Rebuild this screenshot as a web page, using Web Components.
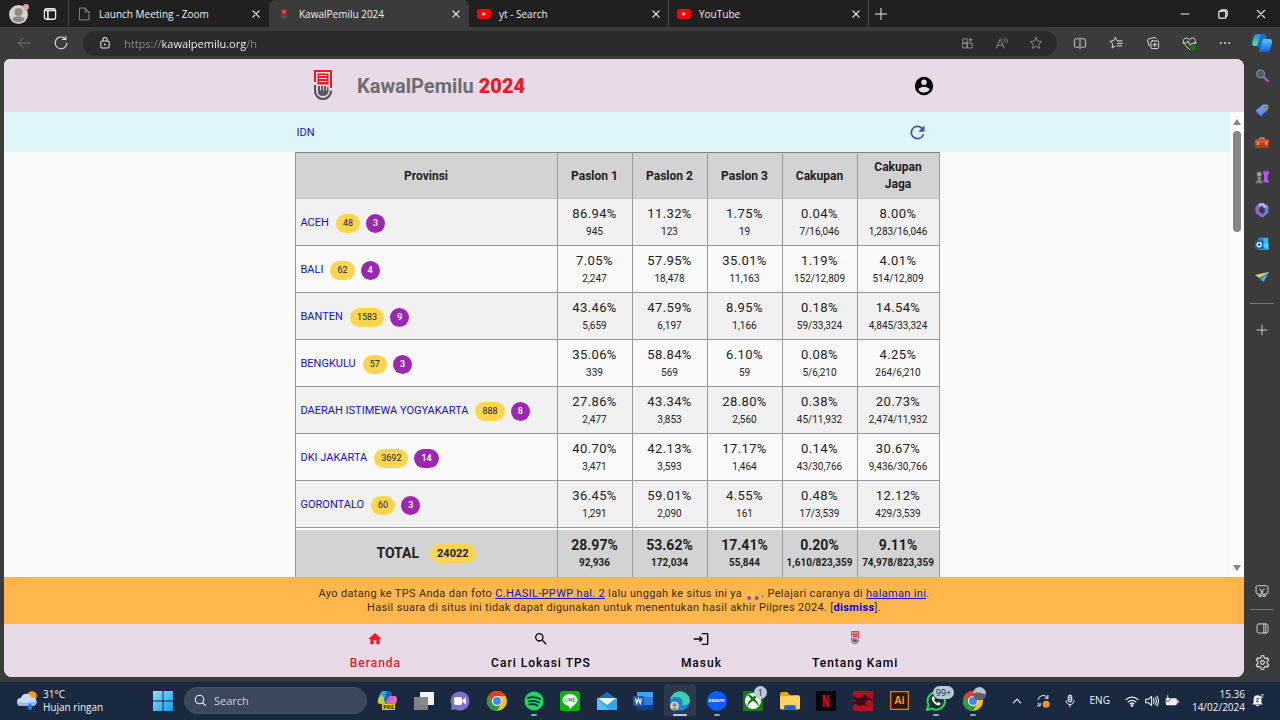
<!DOCTYPE html>
<html lang="id">
<head>
<meta charset="utf-8">
<title>KawalPemilu 2024</title>
<style>
  html, body { margin: 0; height: 100%; }
  body { font-family: Roboto, "Liberation Sans", sans-serif; }
</style>
</head>
<body>
<desktop-screen></desktop-screen>
<script>
const UI = '"Open Sans", "Noto Sans", sans-serif';

const line = (d, w = 1.2, box = 20) =>
  `<svg viewBox="0 0 ${box} ${box}" fill="none" stroke="currentColor" stroke-width="${w}" stroke-linecap="round" stroke-linejoin="round">${d}</svg>`;

const chrome = `<circle cx="10" cy="10" r="10" fill="#fbc116"/>
  <path d="M1.34 5A10 10 0 0 1 18.66 5H10a5 5 0 0 0-4.3 7.5z" fill="#e33b2e"/>
  <path d="M1.34 5A10 10 0 0 0 10 20l4.33-7.5A5 5 0 0 1 5.67 12.5z" fill="#269e48"/>
  <circle cx="10" cy="10" r="5" fill="#fff"/><circle cx="10" cy="10" r="4" fill="#4285f4"/>`;

const ICONS = {
  close: line('<path d="M5.500 5.500l9 9M14.500 5.500l-9 9"/>', 1.5),
  plus: line('<path d="M10 3v14M3 10h14"/>'),
  minus: line('<path d="M5 10h10"/>'),
  restore: line('<rect x="4" y="6" width="10" height="10" rx="1.5"/><path d="M6.500 6a2 2 0 0 1 2-2H14a2 2 0 0 1 2 2v5.500a2 2 0 0 1-2 2"/>', 1.7),
  avatar: `<svg viewBox="0 0 20 20"><circle cx="9.500" cy="10.500" r="9.500" fill="#d4d1cf"/><circle cx="9.500" cy="8" r="4" fill="#8d8a88"/><path d="M3.500 16c0-5 12-5 12 0a9 9 0 0 1-12 0z" fill="#8d8a88"/><circle cx="17" cy="3" r="3" fill="#f19a9a"/></svg>`,
  workspace: line('<rect x="2" y="2.500" width="16" height="15" rx="3"/><path d="M3 5h14M7 6v11" stroke-width="2.200"/>', 1.8),
  page: line('<path d="M4 1.500h7.500L17 7v11.500H4zM11.500 1.500V7H17"/>'),
  youtube: `<svg viewBox="0 0 20 20"><rect x="0" y="3" width="20" height="14" rx="3.500" fill="#f00"/><path d="M8 7l5 3-5 3z" fill="#fff"/></svg>`,
  logo: `<svg viewBox="0 0 36 60"><path d="M2 24V2h32v34" fill="none" stroke="#ec1c24" stroke-width="4"/><rect x="7" y="7" width="22" height="22" fill="#ec1c24"/><path d="M10 11h16M10 17h16M10 23h16" stroke="#f7e3ea" stroke-width="2"/><path d="M2 30v12a16 16 0 0 0 32 0v-1" fill="none" stroke="#58595b" stroke-width="4.500"/><path d="M8 32h4v9h2v-9h4v9h2v-9h4v9h2v-7h3v10q-2 8-11 8-10 0-10-8z" fill="#58595b"/></svg>`,
  back: line('<path d="M17 10H3M9 4l-6 6 6 6"/>'),
  reload: line('<path d="M15.500 5A7.300 7.300 0 1 0 17.300 10M16 1.500V5.500h-4"/>', 1.4),
  lock: line('<rect x="4" y="7" width="12" height="10" rx="2"/><path d="M7 7V5a3 3 0 0 1 6 0v2"/><circle cx="10" cy="12" r=".6"/>', 1.5),
  apps: line('<path d="M3 4h6v6H3zM3 10h6v7H3zM9 10h7v7H9zM13.500 3v5M11 5.500h5"/>'),
  readaloud: line('<path d="M2 17L7.500 4 13 17M4 13h7M12 4c1.500 1 2 3 1.500 5M15 2c2.500 2 3 5 2 8"/>'),
  star: line('<path d="M10 2l2.400 5.200 5.600.7-4.100 3.900 1.100 5.700-5-2.800-5 2.800 1.100-5.700L2 7.900l5.600-.7z"/>'),
  split: line('<path d="M8 4H3.500a1.500 1.500 0 0 0-1.500 1.500v9A1.500 1.500 0 0 0 3.500 16H8M12 4h4.500A1.500 1.500 0 0 1 18 5.500v9a1.500 1.500 0 0 1-1.500 1.500H12M10 2v16"/>'),
  favs: line('<path d="M13 7l-1.500-.2L9 2 6.500 6.800 1.500 7.500l3.700 3.800L4.500 17 9 14.500M13 7h6M12 10.500h7M12 14h6"/>', 1.4),
  collections: line('<rect x="7" y="7" width="11" height="11" rx="2"/><path d="M12.500 10v5M10 12.500h5M4.500 14L2 5.500 4 4l9-2 2 2"/>', 1.4),
  health: line('<path d="M3 10C-1 4 6 0 10 5c4-5 11-1 7 5M1 9.500h5l2-3 3 6 2-3h6M4 12l6 6"/><circle cx="15" cy="15" r="4" fill="#107c10" stroke="none"/>', 1.3),
  dots: `<svg viewBox="0 0 20 20" fill="currentColor"><circle cx="3" cy="10" r="1.600"/><circle cx="10" cy="10" r="1.600"/><circle cx="17" cy="10" r="1.600"/></svg>`,
  copilot: `<svg viewBox="0 0 20 20"><defs><linearGradient id="a" x2="0" y2="1"><stop stop-color="#1d8fe8"/><stop offset="1" stop-color="#5fdc9a"/></linearGradient><linearGradient id="b" x2="0" y2="1"><stop stop-color="#58c8f5"/><stop offset="1" stop-color="#1661e0"/></linearGradient></defs><path d="M5 1h8l-4 12H3Q0 13 0 10L2 3q1-2 3-2z" fill="url(#a)"/><path d="M11 6h6q4 0 3 4l-2 7q-1 2-3 2H7z" fill="url(#b)"/><path d="M9 1h3q2 0 3 5h-4L8 16l-3-3z" fill="#1570cf"/></svg>`,
  person: `<svg viewBox="0 0 24 24" fill="#000"><path d="M12 2a10 10 0 1 0 0 20 10 10 0 0 0 0-20zm0 3a3 3 0 1 1 0 6 3 3 0 0 1 0-6zm0 14.200c-2.500 0-4.710-1.280-6-3.220.03-1.990 4-3.080 6-3.080s5.970 1.090 6 3.080a7.200 7.200 0 0 1-6 3.220z"/></svg>`,
  refresh: `<svg viewBox="0 0 24 24" fill="#3f51b5"><path d="M17.650 6.350A8 8 0 1 0 19.730 14h-2.080A6 6 0 1 1 12 6c1.660 0 3.140.69 4.220 1.780L13 11h7V4z"/></svg>`,
  home: `<svg viewBox="0 0 24 24" fill="#ec1c24"><path d="M10 20v-6h4v6h5v-8h3L12 3 2 12h3v8z"/></svg>`,
  find: `<svg viewBox="0 0 24 24" fill="#000"><path d="M15.500 14h-.79l-.28-.27A6.500 6.500 0 1 0 13.730 14.430l.27.28v.79l5 4.990L20.490 19zm-6 0a4.500 4.500 0 1 1 0-9 4.500 4.500 0 0 1 0 9z"/></svg>`,
  login: `<svg viewBox="0 0 24 24" fill="#000"><path d="M10.500 7.500L9 9l2 2H1v2h10l-2 2 1.500 1.500L15 12zM21 19h-8v2h8a2 2 0 0 0 2-2V5a2 2 0 0 0-2-2h-8v2h8z"/></svg>`,
  hands: `<svg viewBox="0 0 16 16"><path d="M7 2l-3 8 4 2 4-2-3-8z" fill="#ffc93d"/><circle cx="3" cy="12" r="2.800" fill="#8e4fc0"/><circle cx="13" cy="12" r="2.800" fill="#8e4fc0"/></svg>`,
  sbsearch: `<svg viewBox="0 0 20 20"><path d="M13 12l5 5" stroke="#b04fe0" stroke-width="3.500" stroke-linecap="round"/><circle cx="8" cy="7" r="5.500" fill="#4c5f63" stroke="#8c989b" stroke-width="1.600"/></svg>`,
  tag: `<svg viewBox="0 0 20 20"><path d="M11 2h6q2 0 2 2v5l-9 9q-1.500 1.500-3 0L2 13q-1.500-1.500 0-3z" fill="#6c8ff5"/><path d="M2 11l6 6 10-8-8 9q-1.500 1.500-3 0L2 13z" fill="#4668dc"/><circle cx="15" cy="6" r="2.200" fill="#4a4a4a" stroke="#f4c04d" stroke-width="1.200"/></svg>`,
  toolbox: `<svg viewBox="0 0 20 20"><path d="M7 6V3h6v3" fill="none" stroke="#b0b0b0" stroke-width="1.500"/><rect y="5" width="20" height="12" rx="2" fill="#e0562b"/><path d="M0 10h20v5a2 2 0 0 1-2 2H2a2 2 0 0 1-2-2z" fill="#b53a17"/><path d="M4 9v4M16 9v4" stroke="#e8e0d8" stroke-width="2"/></svg>`,
  games: `<svg viewBox="0 0 20 20"><path d="M12 1h2v2h1V1h2v2h1V1h2v5l-2 1v6l2 3v2h-8V16l1-3V7l-1-1z" fill="#b455ea"/><circle cx="6" cy="6" r="3.500" fill="#9a9a9a"/><path d="M3 10h6l-1 2 1 3 2 3v1H1v-1l2-3 1-3z" fill="#818181"/></svg>`,
  m365: `<svg viewBox="0 0 20 20"><path d="M7 0h5l7 5v5l-5-2-5-4-3 3-1 7-4-3V5z" fill="#9db4f0"/><path d="M19 6v8l-7 6H9l-3-3 6-2 2-3V7l3-1z" fill="#5a84e6"/><path d="M1 5l5-3v10l5 4-2 4-8-5z" fill="#8f63d6"/></svg>`,
  outlook: `<svg viewBox="0 0 20 20"><rect x="5" y="1" width="14" height="17" rx="1" fill="#38b6f1"/><path d="M5 1h7v8H5z" fill="#1388d9"/><path d="M5 12l14-3v9H5z" fill="#50d9ff"/><path d="M5 10l14 8H5z" fill="#1490df"/><rect y="5" width="12" height="12" rx="1" fill="#0a64b4"/><circle cx="6" cy="11" r="3" fill="none" stroke="#fff" stroke-width="1.800"/></svg>`,
  plane: `<svg viewBox="0 0 20 20"><path d="M0 7l20-4-8 14-4-4z" fill="#4bb5e8"/><path d="M0 7l20-4L7 11z" fill="#f5cb4a"/><path d="M20 3L7 11v5l3-3z" fill="#2a86c5"/></svg>`,
  snip: line('<path d="M5 14H3a1.500 1.500 0 0 1-1.500-1.500V4A1.500 1.500 0 0 1 3 2.500h14A1.500 1.500 0 0 1 18.500 4v8.500A1.500 1.500 0 0 1 17 14h-2" stroke-dasharray="3 1.500"/><path d="M7 7l5 8M13 7l-5 8"/><circle cx="7" cy="16.500" r="1.700"/><circle cx="13" cy="16.500" r="1.700"/>', 1.4),
  panel: line('<rect x="1.500" y="3" width="17" height="14" rx="3"/><path d="M12 3v14M15 3v14"/>', 1.3),
  gear: line('<path d="M8.300 1h3.400l.5 2.800 1.700 1 2.700-1 1.700 3-2.200 1.800v2.800l2.200 1.800-1.700 3-2.700-1-1.700 1-.5 2.800H8.300l-.5-2.800-1.700-1-2.700 1-1.700-3 2.200-1.800V8.600L1.700 6.800l1.700-3 2.700 1 1.700-1z"/><circle cx="10" cy="10" r="2.500"/>', 1.5),
  weather: `<svg viewBox="0 0 20 20"><circle cx="15" cy="5" r="4.800" fill="#f69a1c"/><path d="M4 15a4 4 0 0 1 0-8 5.500 5.500 0 0 1 10.500-.5A4.300 4.300 0 0 1 16 15z" fill="#c9dcfa"/><path d="M4 15a4 4 0 0 1-3.800-5C4 13 12 12 19.500 10A4 4 0 0 1 16 15z" fill="#9ab6ef"/><path d="M13 12c3 3 3 7 0 7s-3-4 0-7z" fill="#2374e1"/></svg>`,
  windows: `<svg viewBox="0 0 20 20"><defs><linearGradient id="w" x2="1" y2="1"><stop stop-color="#8be0ff"/><stop offset="1" stop-color="#129bf0"/></linearGradient></defs><path d="M0 0h9.500v9.500H0zM10.500 0H20v9.500h-9.500zM0 10.500h9.500V20H0zM10.500 10.500H20V20h-9.500z" fill="url(#w)"/></svg>`,
  glass: line('<circle cx="8.500" cy="8.500" r="6.500"/><path d="M13.500 13.500L18 18"/>', 1.7),
  copilotpre: `<svg viewBox="0 0 20 20"><path d="M6 0h7l-4 12H3q-3 0-2-4L3 3q1-3 3-3z" fill="#2ca5e5"/><path d="M3 4l6 3-1 6H3q-3 0-2-4z" fill="#b9d33e"/><path d="M12 5h5q3 0 3 4l-2 5H8z" fill="#c966db"/><path d="M10 0h3q2 0 2 5h-4L8 12 7 8z" fill="#175fc5"/><path d="M17 5q3 0 3 4l-2 5h-4z" fill="#ee6f9c"/></svg>`,
  taskview: `<svg viewBox="0 0 20 20"><rect x="6" y="1" width="14" height="13" fill="#f2f2f2"/><rect y="6" width="14" height="13" fill="#858585" fill-opacity=".95"/></svg>`,
  chat: `<svg viewBox="0 0 20 20"><circle cx="10" cy="10" r="9.500" fill="#7b73cf"/><path d="M1 19l1-6 6 5z" fill="#7b73cf"/><rect x="4" y="6" width="8" height="8" rx="2" fill="#fff"/><path d="M12.500 9L16 6.500v7L12.500 11z" fill="#fff"/></svg>`,
  chrome: `<svg viewBox="0 0 20 20">${chrome}</svg>`,
  chromeuser: `<svg viewBox="0 0 20 20">${chrome}</svg>`,
  spotify: `<svg viewBox="0 0 20 20"><circle cx="10" cy="10" r="9.500" fill="#1ed760"/><path d="M4 7q6-2 12 1M5 10.500q5-1.500 10 1M5.500 13.500q4-1 8 1" stroke="#15233a" stroke-width="1.800" fill="none" stroke-linecap="round"/></svg>`,
  line: `<svg viewBox="0 0 20 20"><rect width="20" height="20" rx="3" fill="#06b806"/><ellipse cx="10" cy="9" rx="7.500" ry="6" fill="#fff"/><path d="M8 14l2 4 5-5z" fill="#fff"/><path d="M5 7v3.500h1.500M8 7v3.500M9.500 10.500V7l2 3.500V7M15 7h-1.800v3.500H15M13.200 8.800H15" stroke="#06b806" stroke-width=".8" fill="none"/></svg>`,
  mail: `<svg viewBox="0 0 20 20"><path d="M0 8l10-7 10 7z" fill="#1a6dbd"/><path d="M0 7h20v12H0z" fill="#2fa7e8"/><path d="M1 7h18l-9 7z" fill="#f1f6fa"/><path d="M0 7l12 12H0z" fill="#50c0f2"/></svg>`,
  word: `<svg viewBox="0 0 20 20"><rect x="4" y="1" width="16" height="18" rx="1" fill="#2b7cd3"/><path d="M4 1h16v5H4z" fill="#41a5ee"/><path d="M4 14h16v5H4z" fill="#103f91"/><rect y="5" width="11" height="10" rx="1" fill="#185abd"/><path d="M2.500 7.500l1.300 5 1.700-5 1.700 5 1.300-5" stroke="#fff" stroke-width="1.200" fill="none"/></svg>`,
  edge: `<svg viewBox="0 0 20 20"><circle cx="10" cy="10" r="9.800" fill="#1687ce"/><path d="M.3 9A9.800 9.800 0 0 1 19.800 9c.4 5-5 6-8 4.500 2-3 0-7-4-7C4 6.500 1 8 .3 9z" fill="#3fcfae"/><path d="M.3 9C3 5 11 5 12 10c-4-3-8 1-5 7-5 0-7-4-6.700-8z" fill="#1c7fce"/><circle cx="4.500" cy="15" r="4.500" fill="#d0cfcd"/><circle cx="4.500" cy="14" r="2" fill="#8a8886"/><path d="M2 18q2.500-3 5 0-2.500 2-5 0z" fill="#8a8886"/></svg>`,
  zoom: `<svg viewBox="0 0 20 20"><circle cx="10" cy="10" r="10" fill="#0b5cff"/></svg>`,
  xbox: `<svg viewBox="0 0 20 20"><rect width="20" height="20" rx="1" fill="#107c10"/><circle cx="10" cy="10" r="8" fill="#fff"/><path d="M4 4q3-1 6 2 3-3 6-2-2 1-4 4 4 4 4 8-3-5-6-6-3 1-6 6 0-4 4-8-2-3-4-4z" fill="#107c10"/></svg>`,
  folder: `<svg viewBox="0 0 20 20"><path d="M0 3q0-2 2-2h5l3 3h8q2 0 2 2v4H0z" fill="#e8a317"/><rect y="5" width="20" height="13.500" rx="1.500" fill="#ffd35c"/><path d="M4 19v-3q0-2 2-2h8q2 0 2 2v3z" fill="#1976d2"/><path d="M7 17h6" stroke="#0c4c8f"/></svg>`,
  netflix: `<svg viewBox="0 0 20 20"><rect width="20" height="20" fill="#050505"/><path d="M7.800 4v12M12.200 4v12" stroke="#b20710" stroke-width="2.200"/><path d="M6.700 4h2.200l4.400 12h-2.200z" fill="#e50914"/></svg>`,
  dragon: `<svg viewBox="0 0 20 20"><rect width="20" height="20" fill="#b0101f"/><path d="M0 5l5 2 4-1 3-3 2 3 5 2 1 2-4-1-3 1-1 3 4 2-6-1-4 1-3-2-3 1v-3l4-1-4-2z" fill="#3a0d18"/></svg>`,
  ai: `<svg viewBox="0 0 20 20"><rect x=".7" y=".7" width="18.600" height="18.600" fill="#2c1503" stroke="#e8841a" stroke-width="1.300"/></svg>`,
  whatsapp: `<svg viewBox="0 0 20 20"><path d="M1 19l1.500-5A8.700 8.700 0 1 1 6 17.600z" fill="#15332f" stroke="#27d367" stroke-width="2"/><path d="M6 6q2-2 3 2l-1 1q1 2 3 3l1-1q4 1 2 3-3 1.500-6-2T6 6z" fill="#e9fff0"/></svg>`,
  orb: `<svg viewBox="0 0 20 20"><circle cx="10" cy="10" r="10" fill="#b9c2c9"/><path d="M0 10l7-2 4 1 9 2a10 10 0 0 1-20 0z" fill="#5f6262"/></svg>`,
  chevron: line('<path d="M4 13l6-6 6 6"/>', 2),
  sync: line('<path d="M3 8a7.500 7.500 0 0 1 14-2M17 2v4h-4M5 16a7 7 0 0 1-2-3M2 17h4v-4"/><circle cx="14.500" cy="14.500" r="5" fill="#f7941d" stroke="none"/>', 1.4),
  mic: line('<rect x="7.500" y="1.500" width="5" height="10" rx="2.500" fill="#8795a8"/><path d="M4.500 9.500a5.500 5.500 0 0 0 11 0M10 15v3.500"/>', 1.4),
  wifi: line('<path d="M1.500 8a12 12 0 0 1 17 0M4.500 11.200a8 8 0 0 1 11 0M7.300 14a4 4 0 0 1 5.400 0"/><circle cx="10" cy="16.500" r="1"/>', 1.8),
  volume: line('<path d="M1 7.500h4l4.500-4v13l-4.500-4H1zM12 7q2 3 0 6M14.500 5q3.500 5 0 10M17 3q4.500 7 0 14"/>', 1.5),
  battery: `<svg viewBox="0 0 20 20" fill="#f1f4f8"><rect x="1" y="6" width="16" height="10" rx="2"/><rect x="17.500" y="9" width="2" height="4"/><path d="M3 1v4H1v4l3 2 3-2V5H5V1z" stroke="#1b2940"/></svg>`,
  bell: `<svg viewBox="0 0 20 20"><path d="M10 2a6 6 0 0 1 6 6v5l2 3H2l2-3V8a6 6 0 0 1 6-6zM7 17h6q-3 4-6 0z" fill="#f1f4f8"/><path d="M8 7h4l-4 5h4" stroke="#1b2940" stroke-width="1.200" fill="none"/><path d="M15 1h4l-4 4h4" stroke="#f1f4f8" stroke-width="1.200" fill="none"/></svg>`,
  up: `<svg viewBox="0 0 8 8"><path d="M4 1l4 6H0z" fill="#858585"/></svg>`,
  down: `<svg viewBox="0 0 8 8"><path d="M4 7l4-6H0z" fill="#858585"/></svg>`
};

function define(name, render) {
  customElements.define(name, class extends HTMLElement {
    connectedCallback() {
      if (this.shadowRoot) return;
      const t = document.createElement('template');
      t.innerHTML = `<style>
        *, :host { box-sizing: border-box; }
        button { all: unset; box-sizing: border-box; cursor: pointer; display: grid; place-items: center; }
        </style>` + render(this);
      this.attachShadow({ mode: 'open' }).append(t.content.cloneNode(true));
    }
  });
}
const icon = (name, size = 14) => `<ui-icon name="${name}" size="${size}"></ui-icon>`;
const iconButton = (name, label, size = 14) => `<button aria-label="${label}">${icon(name, size)}</button>`;

define('ui-icon', el => {
  const n = el.getAttribute('name'), s = el.getAttribute('size');
  return `<style>:host { display: block; flex: none; } svg { display: block; width: ${s}px; height: ${n === 'logo' ? Math.round(s * 5 / 3) : s}px; }</style>${ICONS[n]}`;
});

define('browser-tab', el => {
  const logo = el.getAttribute('icon') === 'logo';
  return `<style>
  :host { display: flex; align-items: center; flex: 0 1 200px; height: 27px; padding: 0 6px 0 8px; color: #eee; font: 10px ${UI}; }
  :host([active]) { background: #3b3b3b; border-radius: 6px 6px 0 0; }
  :host([ruled]) { box-shadow: inset -1px 0 #4c4c4c; }
  .fav { display: grid; place-items: center; width: 14px; color: #999; }
  .title { flex: 1; padding: 0 8px; text-align: left; justify-items: start; }
  .x { color: #fff; }
  </style><span class="fav">${icon(el.getAttribute('icon'), logo ? 6 : 14)}</span><button class="title" role="tab"><slot></slot></button>
  <button class="x" aria-label="Tutup">${icon('close', 14)}</button>`;
});

define('tab-strip', () => `<style>
  :host { display: flex; background: #202020; height: 27px; color: #f2f2f2; }
  .lead { display: flex; align-items: center; width: 69px; padding-left: 9px; gap: 14px; border-right: 1px solid #454545; }
  .new { width: 24px; }
  .win { display: flex; margin-left: auto; } .win button { width: 38px; }
  </style>
  <div class="lead">${iconButton('avatar', 'Profil', 20)}${iconButton('workspace', 'Tab', 14)}</div>
  <browser-tab icon="page">Launch Meeting - Zoom</browser-tab>
  <browser-tab icon="logo" active>KawalPemilu 2024</browser-tab>
  <browser-tab icon="youtube" ruled>yt - Search</browser-tab>
  <browser-tab icon="youtube" ruled>YouTube</browser-tab>
  <button class="new" aria-label="Tab baru">${icon('plus', 16)}</button>
  <div class="win">${iconButton('minus', 'Perkecil', 16)}${iconButton('restore', 'Pulihkan', 14)}${iconButton('close', 'Tutup', 16)}</div>`);

define('browser-toolbar', () => `<style>
  :host { display: flex; align-items: center; height: 32px; background: #3b3b3b; color: #ddd; }
  .nav { display: flex; width: 83px; padding-left: 5px; } .nav button { width: 37px; }
  .nav button:first-child { color: #777; }
  .addr { flex: 1; height: 25px; display: flex; align-items: center; border-radius: 13px; background: #2b2b2b; padding: 0 4px 0 15px; }
  input { flex: 1; min-width: 0; border: 0; outline: 0; padding: 0; margin-left: 12px; font: 11px ${UI}; color: #fff;
    background: linear-gradient(90deg, #8c8c8c 38px, #fff 38px, #fff 122px, #8c8c8c 122px); -webkit-background-clip: text; background-clip: text; -webkit-text-fill-color: transparent; }
  .addr button { width: 34px; color: #9a9a9a; }
  .tools { display: grid; grid-template-columns: repeat(6, 1fr); width: 218px; margin-left: 5px; }
  </style>
  <div class="nav">${iconButton('back', 'Kembali', 16)}${iconButton('reload', 'Muat ulang', 16)}</div>
  <div class="addr">${icon('lock', 14)}<input aria-label="Alamat" value="https://kawalpemilu.org/h">
  ${iconButton('apps', 'Aplikasi')}${iconButton('readaloud', 'Baca')}${iconButton('star', 'Favorit')}</div>
  <div class="tools">${iconButton('split', 'Layar terpisah')}${iconButton('favs', 'Favorit')}${iconButton('collections', 'Koleksi')}${iconButton('health', 'Performa', 15)}${iconButton('dots', 'Menu', 12)}${iconButton('copilot', 'Copilot', 20)}</div>`);

define('site-header', () => `<style>
  :host { display: block; background: #e8dae7; }
  .in { display: flex; align-items: center; width: min(100%, 640px); height: 53px; margin: 0 auto; padding: 0 9px 2px 10px; }
  h1 { flex: 1; margin: 2px 0 0 25px; font-size: 20px; line-height: 24px; font-weight: 700; color: #6d6e71; }
  b { color: #ec1c24; } button { margin-top: 2px; }
  </style><div class="in">${icon('logo', 18)}<h1>KawalPemilu <b>2024</b></h1>${iconButton('person', 'Akun', 22)}</div>`);

define('region-path', () => `<style>
  :host { display: block; background: #dff6f8; }
  .in { display: flex; align-items: center; justify-content: space-between; width: min(100%, 645px); height: 40px; margin: 0 auto; padding: 0 12px 0 2px; }
  a { font-size: 11px; color: #11c; text-decoration: none; }
  </style><div class="in"><a href="#IDN">IDN</a>${iconButton('refresh', 'Segarkan', 21)}</div>`);

const ROWS = [
  ['ACEH', 48, 3, '86.94% 945', '11.32% 123', '1.75% 19', '0.04% 7/16,046', '8.00% 1,283/16,046'],
  ['BALI', 62, 4, '7.05% 2,247', '57.95% 18,478', '35.01% 11,163', '1.19% 152/12,809', '4.01% 514/12,809'],
  ['BANTEN', 1583, 9, '43.46% 5,659', '47.59% 6,197', '8.95% 1,166', '0.18% 59/33,324', '14.54% 4,845/33,324'],
  ['BENGKULU', 57, 3, '35.06% 339', '58.84% 569', '6.10% 59', '0.08% 5/6,210', '4.25% 264/6,210'],
  ['DAERAH ISTIMEWA YOGYAKARTA', 888, 8, '27.86% 2,477', '43.34% 3,853', '28.80% 2,560', '0.38% 45/11,932', '20.73% 2,474/11,932'],
  ['DKI JAKARTA', 3692, 14, '40.70% 3,471', '42.13% 3,593', '17.17% 1,464', '0.14% 43/30,766', '30.67% 9,436/30,766'],
  ['GORONTALO', 60, 3, '36.45% 1,291', '59.01% 2,090', '4.55% 161', '0.48% 17/3,539', '12.12% 429/3,539']
];
const cells = list => list.map(c => { const [p, n] = c.split(' '); return `<td>${p}<small>${n}</small></td>`; }).join('');

define('result-table', () => `<style>
  :host { display: block; width: min(100%, 645px); margin: 0 auto; }
  table { width: 100%; table-layout: fixed; border-spacing: 0; border-left: 1px solid #999; color: #212121; }
  col:first-child { width: 262px; } col:last-child { width: 82px; }
  th, td { height: 47px; padding: 0; text-align: center; font-size: 13px; line-height: 18px; border-right: 1px solid #999; border-bottom: 1px solid #999; }
  td { letter-spacing: .03em; }
  thead th { height: 47px; padding-top: 1px; background: #d3d3d3; font-size: 12px; line-height: 17px; border-top: 1px solid #808080; border-bottom-color: #c4c4c4; }
  tbody tr { background: #fafafa; } tbody tr:nth-child(odd) { background: #f1f1f1; }
  tbody th { text-align: left; padding: 2px 0 0 5px; font-size: 11px; font-weight: 400; }
  a { color: #11c; text-decoration: none; }
  small { display: block; font-size: 10px; line-height: 17px; letter-spacing: normal; }
  .n { display: inline-block; height: 19px; line-height: 19px; padding: 0 7px; margin-left: 7px; border-radius: 10px; background: #ffd54f; font-size: 9px; vertical-align: middle; }
  .n.v { margin-left: 6px; background: #9c27b0; color: #fff; font-weight: 500; }
  tfoot td, tfoot th { height: 49px; background: #d3d3d3; border-top: 2px solid #fafafa; border-bottom: 0; font-weight: 700; font-size: 14px; letter-spacing: normal; }
  tfoot .n { font-size: 11px; margin-left: 11px; }
  </style>
  <table><colgroup><col><col><col><col><col><col></colgroup>
  <thead><tr><th>Provinsi</th><th>Paslon 1</th><th>Paslon 2</th><th>Paslon 3</th><th>Cakupan</th><th>Cakupan<br>Jaga</th></tr></thead>
  <tbody>${ROWS.map(([n, a, b, ...c]) => `<tr><th scope="row"><a href="#${encodeURIComponent(n)}">${n}</a><span class="n">${a}</span><span class="n v">${b}</span></th>${cells(c)}</tr>`).join('')}</tbody>
  <tfoot><tr><th scope="row">TOTAL<span class="n">24022</span></th>${cells(['28.97% 92,936', '53.62% 172,034', '17.41% 55,844', '0.20% 1,610/823,359', '9.11% 74,978/823,359'])}</tr></tfoot></table>`);

define('scroll-rail', () => `<style>
  :host { display: flex; flex-direction: column; align-items: center; justify-content: space-between; width: 14px; padding: 6px 0 5px; background: #fcfcfc; }
  .thumb { width: 8px; height: 101px; margin-top: 5px; border-radius: 4px; background: #858585; }
  </style><div>${icon('up', 8)}<div class="thumb"></div></div>${icon('down', 8)}`);

define('info-banner', () => `<style>
  :host { display: block; background: #ffb74d; padding: 10px 16px; text-align: center; font-size: 11px; line-height: 13px; color: #3b2b12; letter-spacing: .03em; height: 47px; }
  p { margin: 0; } a { color: #11c; } .d { font-weight: 700; text-decoration: none; color: #00e; }
  ui-icon { display: inline-block; vertical-align: -4px; margin: 0 2px; }
  </style><p>Ayo datang ke TPS Anda dan foto <a href="#foto">C.HASIL-PPWP hal. 2</a> lalu unggah ke situs ini ya ${icon('hands', 12)}. Pelajari caranya di <a href="#cara">halaman ini</a>.<br>Hasil suara di situs ini tidak dapat digunakan untuk menentukan hasil akhir Pilpres 2024. [<a class="d" href="#dismiss">dismiss</a>].</p>`);

define('site-nav', () => `<style>
  :host { display: block; background: #e8dae7; }
  nav { display: flex; justify-content: center; gap: 90px; height: 53px; padding-top: 7px; }
  a { display: flex; flex-direction: column; align-items: center; color: #000; text-decoration: none; font-size: 12px; line-height: 16px; font-weight: 500; letter-spacing: 1px; }
  a ui-icon { height: 16px; margin-bottom: 8px; }
  .on { color: #ec1c24; }
  </style><nav><a class="on" href="#home">${icon('home', 16)}Beranda</a><a href="#cari">${icon('find', 16)}Cari Lokasi TPS</a><a href="#masuk">${icon('login', 16)}Masuk</a><a href="#tentang">${icon('logo', 8)}Tentang Kami</a></nav>`);

define('web-page', () => `<style>
  :host { display: flex; flex-direction: column; flex: 1; min-width: 0; border-radius: 6px 8px 8px 8px; overflow: hidden; background: #fafafa; }
  .mid { flex: 1; min-height: 0; display: flex; }
  .view { flex: 1; min-width: 0; overflow: hidden; }
  </style><site-header></site-header><div class="mid"><div class="view"><region-path></region-path><result-table></result-table></div><scroll-rail></scroll-rail></div><info-banner></info-banner><site-nav></site-nav>`);

define('side-bar', () => `<style>
  :host { display: flex; flex-direction: column; align-items: center; width: 36px; padding: 10px 0 11px; color: #e2e2e2; }
  .apps { display: flex; flex-direction: column; justify-content: space-between; height: 215px; }
  hr { width: 24px; border: 0; border-top: 1px solid #777; margin: 19px 0; }
  .end { margin-top: auto; display: flex; flex-direction: column; align-items: center; }
  .end hr { margin: 11px 0 12px; } .end button:last-child { margin-top: 20px; }
  </style><div class="apps">${[['sbsearch', 'Cari'], ['tag', 'Belanja'], ['toolbox', 'Alat'], ['games', 'Game'], ['m365', 'Microsoft 365'], ['outlook', 'Outlook'], ['plane', 'Drop']].map(i => iconButton(i[0], i[1], 14)).join('')}</div>
  <hr>${iconButton('plus', 'Tambah', 14)}<div class="end">${iconButton('snip', 'Potong layar')}<hr>${iconButton('panel', 'Panel', 13)}${iconButton('gear', 'Setelan', 15)}</div>`);

const APPS = ['copilotpre', 'taskview', 'chat', 'chrome', 'spotify', 'line', 'mail', 'word', 'edge', 'zoom', 'xbox', 'folder', 'netflix', 'dragon', 'ai', 'whatsapp', 'chromeuser'];
const EXTRA = {
  copilotpre: '<span class="pre">PRE</span>', zoom: '<span class="zm">zoom</span>', ai: '<span class="ai">Ai</span>',
  xbox: '<span class="badge">1</span>', whatsapp: '<span class="badge wide">99+</span>', chromeuser: `<span class="orb">${icon('orb', 13)}</span>`
};

define('task-bar', () => `<style>
  :host { display: flex; align-items: center; height: 39px; padding-bottom: 1px; background: #1b2940; color: #f1f4f8; font: 10px/13px ${UI}; border-top: 1px solid #2c3850; }
  .weather { display: flex; align-items: center; gap: 6px; width: 153px; padding-left: 17px; text-align: left; }
  .weather span { display: block; }
  .search { display: flex; align-items: center; gap: 7px; width: 183px; height: 27px; margin: 0 2px 0 11px; padding: 0 9px; border-radius: 14px; background: #3b475b; border: 1px solid #465266; }
  input { flex: 1; min-width: 0; border: 0; padding: 0; background: none; outline: 0; color: #fff; font: 11px ${UI}; } input::placeholder { color: #ccd2da; }
  .apps { display: grid; grid-template-columns: repeat(17, 1fr); flex: 0 1 622px; align-self: stretch; }
  .apps button { position: relative; }
  .run::after { content: ""; position: absolute; bottom: 3px; left: 50%; margin-left: -3px; width: 6px; height: 2px; border-radius: 1px; background: #98a2b1; }
  .cur::before { content: ""; position: absolute; inset: 2px; border-radius: 4px; background: #2b384e; }
  .cur.run::after { width: 14px; margin-left: -7px; background: #b9c6d6; } .cur ui-icon { position: relative; }
  .pre { position: absolute; left: 13px; top: 22px; background: #ffca1a; color: #222; font-size: 6px; line-height: 6px; font-weight: 700; padding: 0 1px; border-radius: 1px; }
  .zm, .ai { position: absolute; inset: 0; display: grid; place-items: center; font-size: 6px; font-weight: 700; color: #fff; }
  .ai { font-size: 10px; color: #ff9a1f; }
  .badge { position: absolute; left: 19px; top: 4px; min-width: 13px; padding: 0 3px; line-height: 13px; border-radius: 7px; background: #b9c9dc; color: #1b2430; font-size: 9px; text-align: center; }
  .badge.wide { left: 15px; }
  .orb { position: absolute; left: 19px; top: 5px; }
  .tray { display: flex; align-items: center; margin-left: auto; padding-right: 16px; gap: 6px; }
  .tray .g { gap: 13px; display: flex; align-items: center; margin-right: 9px; }
  .clock { text-align: right; margin-left: 7px; } .clock span { display: block; }
  </style>
  <button class="weather" style="display:flex">${icon('weather', 20)}<span><span>31°C</span><span>Hujan ringan</span></span></button>
  ${iconButton('windows', 'Mulai', 20)}
  <label class="search">${icon('glass', 13)}<input type="search" placeholder="Search" aria-label="Search"></label>
  <div class="apps">${APPS.map(a => `<button aria-label="${a}" class="${['spotify', 'edge', 'zoom', 'whatsapp', 'chromeuser'].includes(a) ? 'run' : ''} ${a === 'edge' ? 'cur' : ''}">${icon(a, a === 'ai' ? 19 : 20)}${EXTRA[a] || ''}</button>`).join('')}</div>
  <div class="tray"><div class="g">${iconButton('chevron', 'Ikon tersembunyi', 12)}${iconButton('sync', 'Pembaruan')}${iconButton('mic', 'Mikrofon')}<span>ENG</span></div>
  ${iconButton('wifi', 'Wi-Fi')}${iconButton('volume', 'Volume')}${iconButton('battery', 'Baterai')}
  <div class="clock"><span>15.36</span><span>14/02/2024</span></div>${iconButton('bell', 'Notifikasi', 13)}</div>`);

define('desktop-screen', () => `<style>
  :host { display: flex; flex-direction: column; height: 100vh; background: #3b3b3b; overflow: hidden; }
  .main { flex: 1; min-height: 0; display: flex; }
  .main web-page { margin: 0 0 4px 4px; }
  </style><tab-strip></tab-strip><browser-toolbar></browser-toolbar><div class="main"><web-page></web-page><side-bar></side-bar></div><task-bar></task-bar>`);
</script>
</body>
</html>
